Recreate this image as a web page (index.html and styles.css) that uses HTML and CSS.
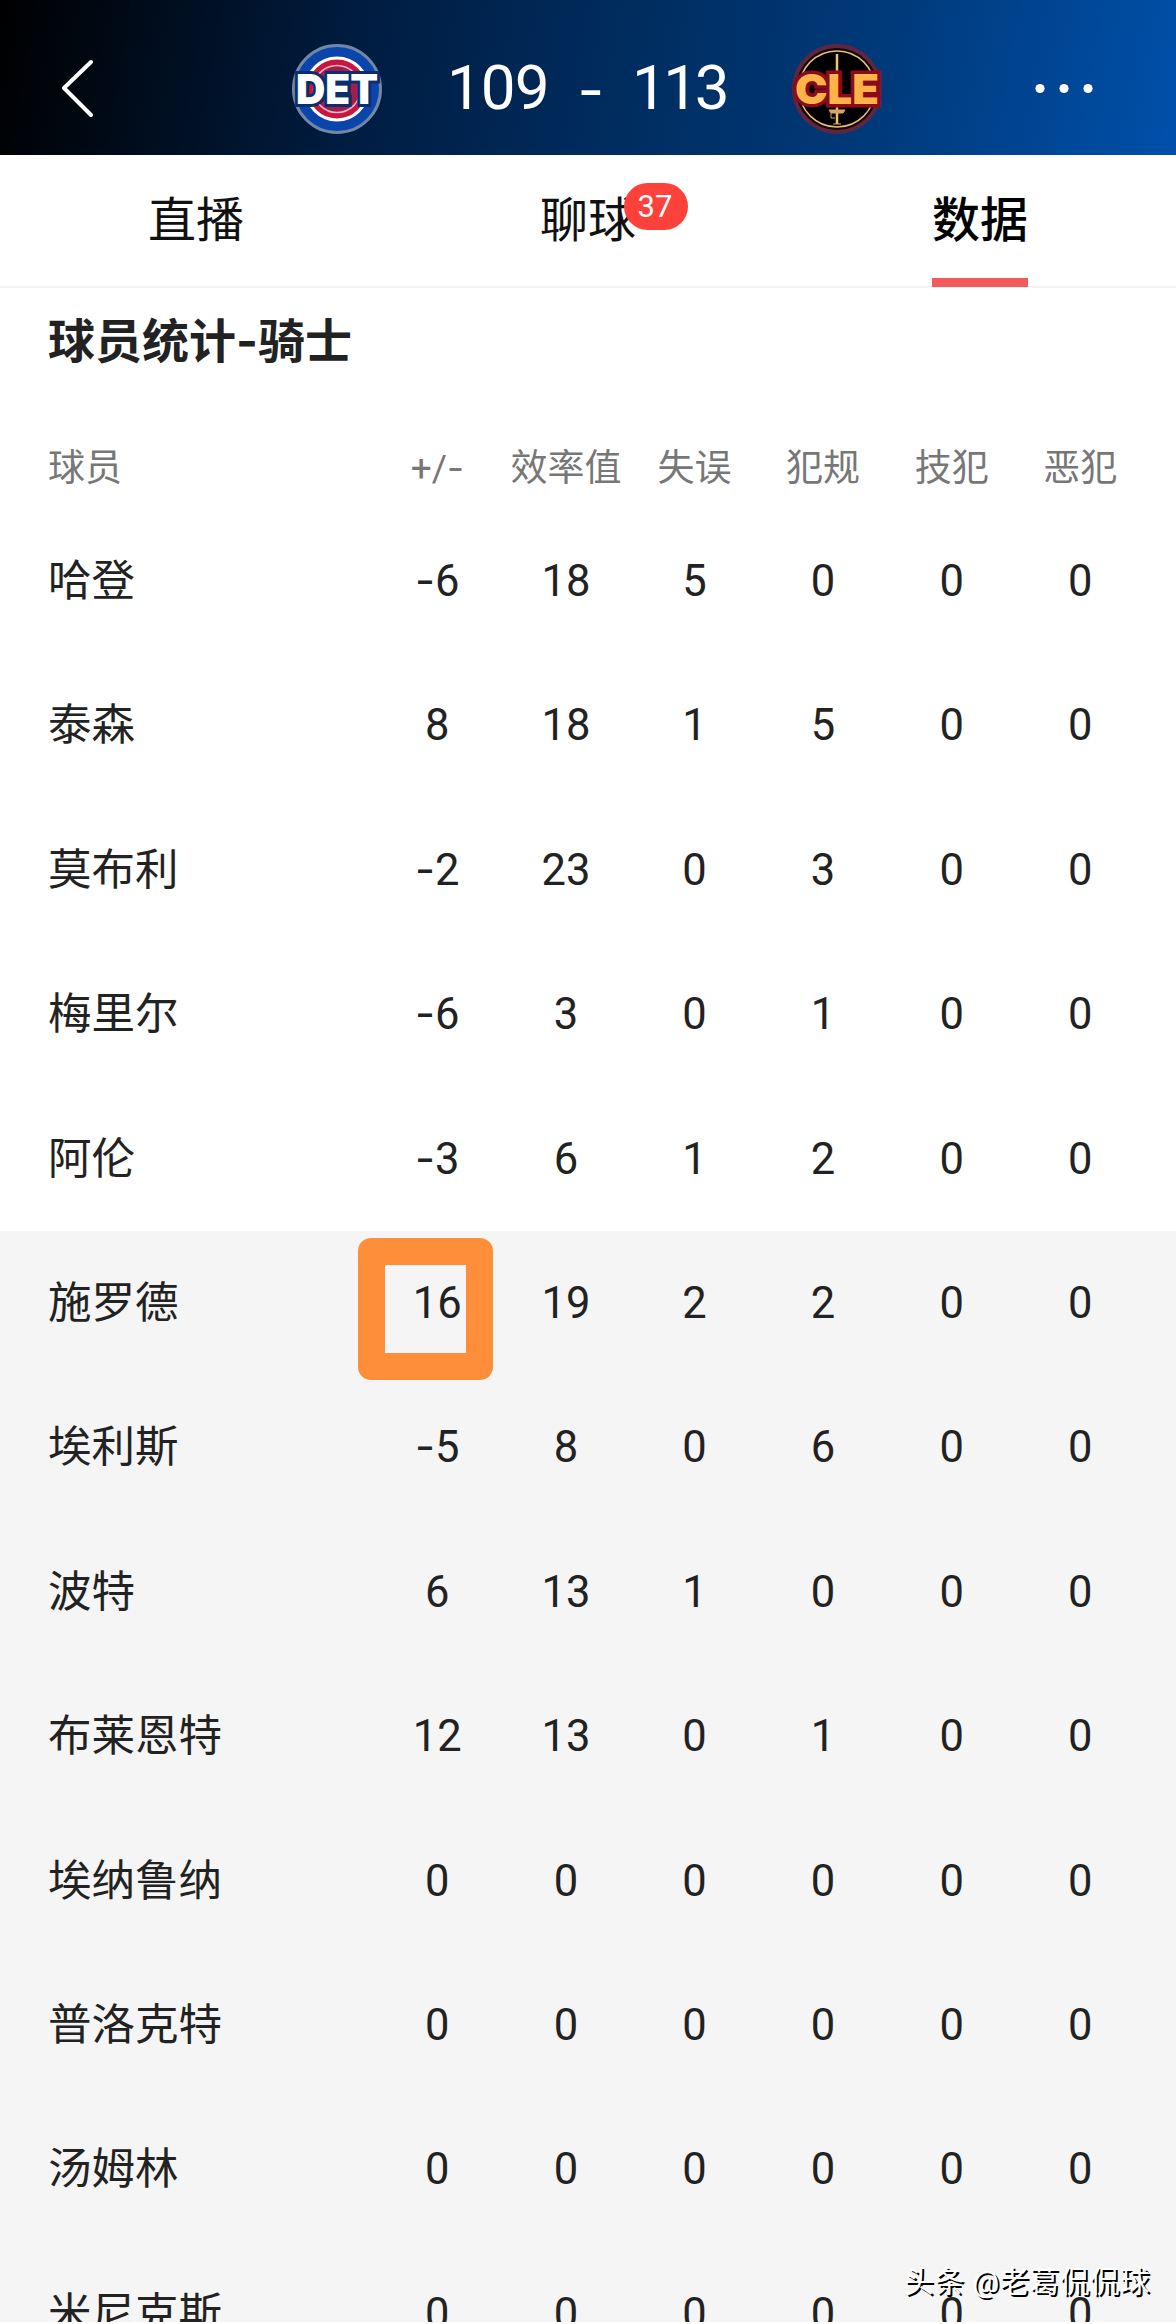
FILE: index.html
```html
<!DOCTYPE html>
<html lang="zh-CN">
  <head>
    <meta charset="UTF-8" />
    <meta name="viewport" content="width=device-width, initial-scale=1.0" />
    <title>球员统计</title>
    <link rel="stylesheet" href="styles.css">
  </head>
  <body onload="populate()">
    <div class="main">
      <header class="topbar">
        <svg class="back" viewBox="0 0 34 60" width="34" height="60">
          <path d="M31 3 L4 29 L31 56" fill="none" stroke="#fff" stroke-width="4" stroke-linecap="round" stroke-linejoin="round" />
        </svg>
        <div class="match">
          <svg class="logo" viewBox="0 0 92 92" width="92" height="92">
            <circle cx="46" cy="46" r="43.5" fill="#0a45ac" stroke="#7187a5" stroke-width="3" />
            <circle cx="46" cy="46" r="31" fill="#c9163f" stroke="#fff" stroke-width="3" />
            <circle cx="46" cy="46" r="23.5" fill="#a31d4c" stroke="#e9b7c5" stroke-width="1.5" />
            <text x="46" y="61" class="det" textLength="82" lengthAdjust="spacingAndGlyphs">DET</text>
          </svg>
          <div class="score"><span>109</span><span class="dash">-</span><span class="away">113</span></div>
          <svg class="logo" viewBox="0 0 92 92" width="92" height="92">
            <circle cx="46" cy="46" r="43" fill="#160509" stroke="#5f2640" stroke-width="4" />
            <circle cx="46" cy="46" r="38" fill="#000" stroke="#e6bd7e" stroke-width="1.5" />
            <path d="M46 11 V30 M46 63 V81" stroke="#efc178" stroke-width="2.5" />
            <path d="M38 67 H54 L52 70 H40 Z M40 70 V75 M40 75 H44 M42 81 H50" fill="#d9a55f" stroke="#d9a55f" stroke-width="1" />
            <text x="46" y="61" class="cle" textLength="84" lengthAdjust="spacingAndGlyphs">CLE</text>
          </svg>
        </div>
        <svg class="more" viewBox="0 0 60 12" width="60" height="12">
          <circle cx="6" cy="5.5" r="4.6" fill="#fff" />
          <circle cx="30" cy="5.5" r="4.6" fill="#fff" />
          <circle cx="54" cy="5.5" r="4.6" fill="#fff" />
        </svg>
      </header>
      <nav class="tabs">
        <div class="tab"><span>直播</span></div>
        <div class="tab"><span>聊球<b class="badge">37</b></span></div>
        <div class="tab active"><span>数据</span></div>
      </nav>
      <h1>球员统计<i class="neg">-</i>骑士</h1>
      <div class="row head">
        <div>球员</div>
        <div>+/<i class="neg">-</i></div>
        <div>效率值</div>
        <div>失误</div>
        <div>犯规</div>
        <div>技犯</div>
        <div>恶犯</div>
      </div>
      <div id="starters"></div>
      <div id="bench"></div>
      <div class="watermark">头条 @老葛侃侃球</div>
    </div>
    <script>
      // name, +/-, efficiency, turnovers, fouls, technical, flagrant
      const starters = [
        ["哈登", -6, 18, 5, 0, 0, 0],
        ["泰森", 8, 18, 1, 5, 0, 0],
        ["莫布利", -2, 23, 0, 3, 0, 0],
        ["梅里尔", -6, 3, 0, 1, 0, 0],
        ["阿伦", -3, 6, 1, 2, 0, 0],
      ];
      const bench = [
        ["施罗德", 16, 19, 2, 2, 0, 0],
        ["埃利斯", -5, 8, 0, 6, 0, 0],
        ["波特", 6, 13, 1, 0, 0, 0],
        ["布莱恩特", 12, 13, 0, 1, 0, 0],
        ["埃纳鲁纳", 0, 0, 0, 0, 0, 0],
        ["普洛克特", 0, 0, 0, 0, 0, 0],
        ["汤姆林", 0, 0, 0, 0, 0, 0],
        ["米尼克斯", 0, 0, 0, 0, 0, 0],
      ];

      const cell = (value) => {
        let text = String(value).replace("-", '<i class="neg">-</i>');
        // the marked value
        if (value === 16) {
          return `<div class="marked">${text}</div>`;
        }
        return `<div>${text}</div>`;
      };

      const fill = (id, players) => {
        document.getElementById(id).innerHTML = players
          .map((p) => `<div class="row">${p.map(cell).join("")}</div>`)
          .join("");
      };

      const populate = () => {
        fill("starters", starters);
        fill("bench", bench);
      };
    </script>
  </body>
</html>
```
FILE: styles.css
```css
body {
  margin: 0;
  background: #fff;
  color: #222;
  font-family: Roboto, "Noto Sans CJK SC", sans-serif;
}

.main {
  position: relative;
  height: 2322px;
  overflow: hidden;
}

.topbar {
  display: flex;
  align-items: center;
  justify-content: space-between;
  box-sizing: border-box;
  height: 155px;
  padding: 22px 82px 0 60px;
  color: #fff;
  background: linear-gradient(100deg, #000 0%, #001c40 30%, #002c5e 52%, #003a7b 75%, #0050aa 100%);
}

.match {
  display: flex;
  align-items: center;
  margin-left: 46px;
}

.logo {
  display: block;
}

.det,
.cle {
  font-family: Inter, sans-serif;
  font-weight: 900;
  font-size: 41px;
  text-anchor: middle;
  paint-order: stroke;
}

.det {
  fill: #fff;
  stroke: #0b2f6d;
  stroke-width: 6px;
}

.cle {
  fill: #fdb347;
  stroke: #8b0a1c;
  stroke-width: 7px;
}

.score {
  display: flex;
  justify-content: space-between;
  width: 279px;
  margin: 0 65px 0 64px;
  font-size: 62px;
  line-height: 80px;
  letter-spacing: -1px;
}

.dash {
  padding-top: 2px;
  font-family: Inter, sans-serif;
  font-size: 58px;
}

.score .away {
  letter-spacing: -3.5px;
}

.tabs {
  display: grid;
  grid-template-columns: repeat(3, 1fr);
  height: 131px;
  border-bottom: 2px solid #f3f3f3;
  color: #111;
  font-size: 48px;
  line-height: 131px;
  text-align: center;
}

.tab span {
  position: relative;
  display: inline-block;
  height: 132px;
}

.active {
  color: #000;
  font-weight: 500;
}

.active span {
  box-sizing: border-box;
  border-bottom: 9px solid #f15b5c;
}

.badge {
  position: absolute;
  left: 84px;
  top: 28px;
  width: 64px;
  height: 47px;
  border-radius: 24px;
  background: #ff413c;
  color: #fff;
  font-size: 31px;
  font-weight: normal;
  line-height: 47px;
  text-indent: -2px;
}

h1 {
  margin: 0;
  padding-left: 48px;
  height: 111px;
  font-size: 47px;
  line-height: 108px;
}

.neg {
  font-family: Inter, sans-serif;
  font-style: normal;
  line-height: 1;
}

.row {
  display: grid;
  grid-template-columns: 325px repeat(6, 128.6px);
  padding-left: 48px;
  height: 144.4px;
  font-size: 43.5px;
  line-height: 145px;
  text-align: center;
  white-space: nowrap;
}

.row div:first-child {
  text-align: left;
}

.head {
  height: 110px;
  color: #777;
  font-size: 37px;
  line-height: 140px;
}

#bench {
  background: #f5f5f5;
}

.marked {
  position: relative;
}

.marked::before {
  content: "";
  position: absolute;
  left: -15px;
  top: 7px;
  width: 81px;
  height: 88px;
  border: 27px solid #ff8e3b;
  border-radius: 13px;
}

.watermark {
  position: absolute;
  right: 26px;
  bottom: 20px;
  color: #fff;
  font-size: 29.5px;
  line-height: 40px;
  letter-spacing: 0.6px;
  text-shadow: 2px 2px 0 #000;
}
```
